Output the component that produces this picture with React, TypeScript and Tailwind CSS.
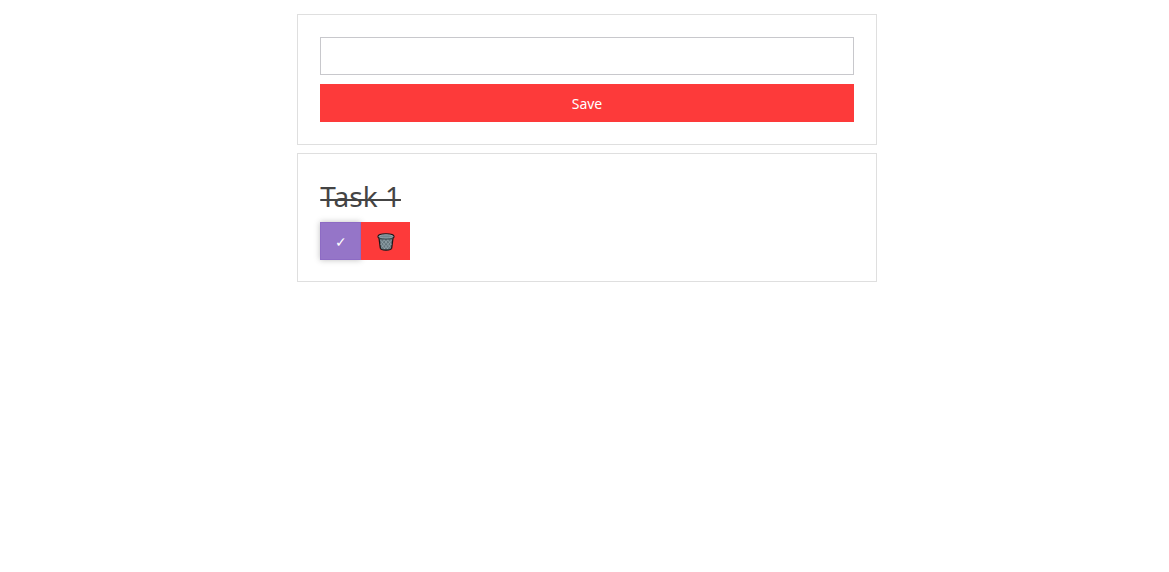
import { useState } from "react";
import type { FormEvent } from "react";

type Task = { id: number; title: string; done: boolean };

function TrashIcon() {
  return (
    <svg viewBox="0 0 18 18" className="h-[18px] w-[18px]" aria-hidden="true">
      <path
        d="M1 3.500C1 1.700 4.500.8 9 .8s8 .9 8 2.700c0 .8-.4 1.400-1 1.700L14.700 15.200c-.3 1.400-2.700 2-5.700 2s-5.400-.6-5.700-2L2 5.200C1.400 4.900 1 4.300 1 3.500Z"
        fill="#65767d"
        stroke="#1c1618"
        strokeWidth="1.200"
      />
      <path
        d="M3.500 7l7.500 9M6.500 6l7 8.500M10 6l4.500 5.500M4 11l4 5M14.500 7L7 16M11.500 6l-7 8.500M8 6l-4.500 5.500M14 11l-4 5"
        fill="none"
        stroke="#94a5ac"
        strokeWidth=".8"
      />
      <ellipse cx="9" cy="3.400" rx="6.900" ry="1.600" fill="#74868e" stroke="#98a9b0" strokeWidth=".9" />
      <path d="M2.400 5.200c2.800 1.300 10.400 1.300 13.200 0" fill="none" stroke="#36444a" strokeWidth=".9" />
    </svg>
  );
}

export default function App() {
  const [draft, setDraft] = useState("");
  const [tasks, setTasks] = useState<Task[]>([{ id: 1, title: "Task 1", done: true }]);

  function save(event: FormEvent) {
    event.preventDefault();
    if (!draft.trim()) return;
    setTasks([...tasks, { id: Date.now(), title: draft, done: false }]);
    setDraft("");
  }

  return (
    <main className="mx-[25%] flex flex-col gap-2 pt-3.5 pl-[5px] font-['Noto_Sans',sans-serif] text-[#444]">
      <form onSubmit={save} className="flex flex-col gap-[9px] border border-[#dfdfdf] p-[22px]">
        <input
          type="text"
          aria-label="Task"
          value={draft}
          onChange={(event) => setDraft(event.target.value)}
          className="h-[38px] w-full border border-[#c8c8cc] bg-white px-3 text-sm outline-none"
        />
        <button type="submit" className="h-[38px] w-full bg-[#fd3a3a] pt-0.5 text-sm text-white">
          Save
        </button>
      </form>
      {tasks.map((task) => (
        <article key={task.id} className="border border-[#dfdfdf] px-[22px] pt-[22px] pb-[21px]">
          <h2
            className={
              task.done
                ? "mb-1.5 text-[28px] leading-10 underline decoration-2 -underline-offset-[8px] [text-decoration-skip-ink:none]"
                : "mb-1.5 text-[28px] leading-10"
            }
          >
            {task.title}
          </h2>
          <div className="flex">
            <button
              type="button"
              aria-label="Toggle done"
              onClick={() => setTasks(tasks.map((t) => (t.id === task.id ? { ...t, done: !t.done } : t)))}
              className="h-[38px] w-[41px] border border-[#8d6bc4] bg-[#9575c8] pt-0.5 text-sm text-white shadow-[0_0_6px_rgba(0,0,0,0.25)]"
            >
              ✓
            </button>
            <button
              type="button"
              aria-label="Delete"
              onClick={() => setTasks(tasks.filter((t) => t.id !== task.id))}
              className="relative flex h-[38px] w-[49px] items-center justify-center bg-[#fd3a3a] pt-px"
            >
              <TrashIcon />
            </button>
          </div>
        </article>
      ))}
    </main>
  );
}
